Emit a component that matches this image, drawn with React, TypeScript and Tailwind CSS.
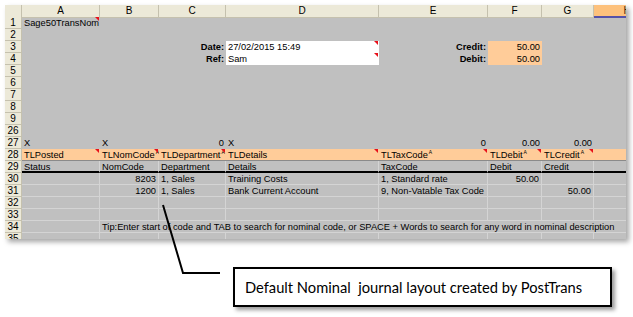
import React from "react";

type Cell = {
  t?: string;
  r?: boolean;
  b?: boolean;
  bg?: string;
  c?: boolean;
  sup?: boolean;
  span?: string;
  over?: boolean;
};

type Row = { n: string; kind: "gray" | "orange" | "white" | "head"; cells: Cell[] };

const GRID =
  "grid grid-cols-[17px_78px_59px_67px_153px_109px_54px_52px_66px] h-[12px]";

const empty = (k: number): Cell[] => Array.from({ length: k }, () => ({}));

const rows: Row[] = [
  { n: "1", kind: "gray", cells: [{ t: "Sage50TransNom", c: true, over: true }, ...empty(7)] },
  { n: "2", kind: "gray", cells: empty(8) },
  {
    n: "3",
    kind: "gray",
    cells: [
      {},
      {},
      { t: "Date:", r: true, b: true },
      { t: "27/02/2015 15:49", bg: "bg-white", c: true },
      { t: "Credit:", r: true, b: true },
      { t: "50.00", r: true, bg: "bg-[#ffcc99]" },
      {},
      {},
    ],
  },
  {
    n: "4",
    kind: "gray",
    cells: [
      {},
      {},
      { t: "Ref:", r: true, b: true },
      { t: "Sam", bg: "bg-white", c: true },
      { t: "Debit:", r: true, b: true },
      { t: "50.00", r: true, bg: "bg-[#ffcc99]" },
      {},
      {},
    ],
  },
  { n: "5", kind: "gray", cells: empty(8) },
  { n: "6", kind: "gray", cells: empty(8) },
  { n: "7", kind: "gray", cells: empty(8) },
  { n: "8", kind: "gray", cells: empty(8) },
  { n: "9", kind: "gray", cells: empty(8) },
  { n: "26", kind: "gray", cells: empty(8) },
  {
    n: "27",
    kind: "gray",
    cells: [
      { t: "X" },
      { t: "X" },
      { t: "0", r: true },
      { t: "X" },
      { t: "0", r: true },
      { t: "0.00", r: true },
      { t: "0.00", r: true },
      {},
    ],
  },
  {
    n: "28",
    kind: "orange",
    cells: [
      { t: "TLPosted", c: true },
      { t: "TLNomCode", c: true, sup: true },
      { t: "TLDepartment", c: true, sup: true },
      { t: "TLDetails", c: true },
      { t: "TLTaxCode", c: true, sup: true },
      { t: "TLDebit", c: true, sup: true },
      { t: "TLCredit", c: true, sup: true },
      {},
    ],
  },
  {
    n: "29",
    kind: "head",
    cells: [
      { t: "Status" },
      { t: "NomCode" },
      { t: "Department" },
      { t: "Details" },
      { t: "TaxCode" },
      { t: "Debit" },
      { t: "Credit" },
      {},
    ],
  },
  {
    n: "30",
    kind: "white",
    cells: [
      {},
      { t: "8203", r: true },
      { t: "1, Sales" },
      { t: "Training Costs" },
      { t: "1, Standard rate" },
      { t: "50.00", r: true },
      {},
      {},
    ],
  },
  {
    n: "31",
    kind: "white",
    cells: [
      {},
      { t: "1200", r: true },
      { t: "1, Sales" },
      { t: "Bank Current Account" },
      { t: "9, Non-Vatable Tax Code" },
      {},
      { t: "50.00", r: true },
      {},
    ],
  },
  { n: "32", kind: "white", cells: empty(8) },
  { n: "33", kind: "white", cells: empty(8) },
  {
    n: "34",
    kind: "white",
    cells: [
      {},
      {
        t: "Tip:Enter start of code and TAB to search for nominal code, or SPACE + Words to search for any word in nominal description",
        span: "col-span-7",
      },
    ],
  },
  { n: "35", kind: "white", cells: empty(8) },
];

const Comment = () => (
  <span className="absolute top-0 right-[1px] w-0 h-0 border-t-[4px] border-l-[4px] border-t-[#e8101a] border-l-transparent" />
);

const SheetCell = ({ cell, kind }: { cell: Cell; kind: Row["kind"] }) => {
  let frame = "";
  if (kind === "white") frame = "border-r border-b border-[#d4d4d4]";
  if (kind === "head") frame = "border-r border-[#d4d4d4] border-b-2 border-b-black";
  if (kind === "orange") frame = "bg-[#ffcc99] border-b border-b-[#8a8a8a]";
  return (
    <div
      className={`relative h-[12px] leading-[12px] whitespace-nowrap px-[2px] ${frame} ${
        cell.bg ?? ""
      } ${cell.span ?? ""} ${cell.r ? "text-right" : "text-left"} ${cell.b ? "font-bold" : ""} ${
        cell.over ? "z-10 overflow-visible" : "overflow-hidden"
      }`}
    >
      {cell.t}
      {cell.sup && <span className="text-[5px] align-top leading-[7px] ml-[1px]">A</span>}
      {cell.c && <Comment />}
    </div>
  );
};

export default function App() {
  return (
    <div className="relative w-[633px] h-[317px] bg-white overflow-hidden pt-[5px] pl-[5px] font-['Liberation_Sans',Arial,sans-serif] text-[9.3px] text-black">
      <div className="w-[621px] h-[234px] overflow-hidden bg-[#c0c0c0] shadow-[3px_3px_5px_rgba(0,0,0,0.35)]">
        <div className={GRID}>
          <div className="bg-[#ece9d8] border-r border-b border-[#c5c1ae]" />
          {["A", "B", "C", "D", "E", "F", "G"].map((l) => (
            <div
              key={l}
              className="bg-[#ece9d8] border-r border-b border-[#c5c1ae] text-center leading-[11px] text-[10px]"
            >
              {l}
            </div>
          ))}
          <div className="bg-[#fdc17c] border-b-2 border-b-[#5552a8] text-center leading-[11px] text-[10px] text-[#3a2a10]">
            H
          </div>
        </div>
        {rows.map((row) => (
          <div key={row.n} className={GRID}>
            <div className="bg-[#ece9d8] border-r border-b border-[#c5c1ae] text-center leading-[11px] text-[10px]">
              {row.n}
            </div>
            {row.cells.map((cell, i) => (
              <SheetCell key={i} cell={cell} kind={row.kind} />
            ))}
          </div>
        ))}
      </div>

      <div className="mt-[28px] ml-[228px] w-[379px] h-[40px] border-2 border-black bg-white flex items-center pl-[10px] shadow-[3px_3px_4px_rgba(0,0,0,0.4)]">
        <span className="font-['Lato',sans-serif] text-[14.7px] whitespace-pre text-black">
          Default Nominal  journal layout created by PostTrans
        </span>
      </div>

      <svg className="absolute inset-0 pointer-events-none" width="633" height="317">
        <polyline points="163,205 183,273 220,273" fill="none" stroke="black" strokeWidth="2" />
      </svg>
    </div>
  );
}
